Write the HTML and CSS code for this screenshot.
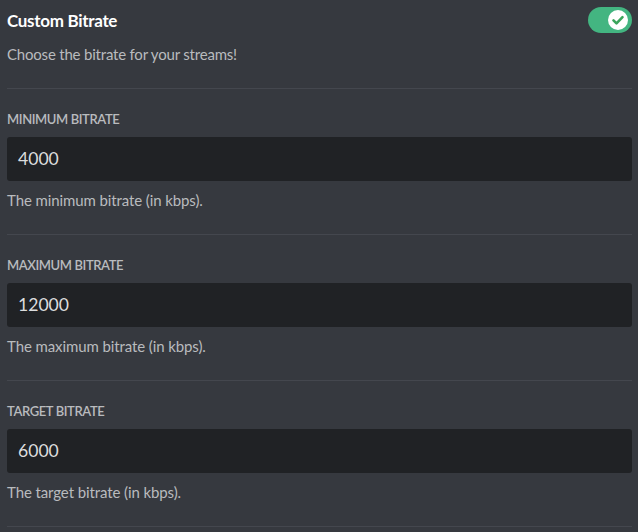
FILE: index.html
```html
<!DOCTYPE html>
<html>

<head>
<link rel="stylesheet" href="styles.css">
</head>

<body>
    <div class="settings">
        <div class="title-row">
            <h2 class="title">Custom Bitrate</h2>
            <div class="toggle">
                <div class="knob">
                    <svg viewBox="0 0 20 20" width="20" height="20">
                        <path d="M5.5 10.3l3 3 6-6.2" fill="none" stroke="#3ba55c" stroke-width="2.6" stroke-linecap="round" stroke-linejoin="round"/>
                    </svg>
                </div>
            </div>
        </div>
        <p class="desc">Choose the bitrate for your streams!</p>

        <div class="divider"></div>

        <div class="field">
            <div class="label">Minimum Bitrate</div>
            <div class="input">4000</div>
            <div class="help">The minimum bitrate (in kbps).</div>
        </div>

        <div class="divider"></div>

        <div class="field">
            <div class="label">Maximum Bitrate</div>
            <div class="input">12000</div>
            <div class="help">The maximum bitrate (in kbps).</div>
        </div>

        <div class="divider"></div>

        <div class="field">
            <div class="label">Target Bitrate</div>
            <div class="input">6000</div>
            <div class="help">The target bitrate (in kbps).</div>
        </div>

        <div class="divider"></div>
    </div>
</body>

</html>
```

FILE: styles.css
```css
body {
    margin: 0;
    background-color: #36393f;
    font-family: Lato, "Noto Sans", sans-serif;
}

.settings {
    padding: 7px 6px 0 7px;
}

.title-row {
    display: flex;
    justify-content: space-between;
    align-items: center;
    height: 26px;
}

.title {
    margin: 0;
    font-size: 17px;
    font-weight: 700;
    letter-spacing: -0.3px;
    color: #ffffff;
}

.toggle {
    width: 44px;
    height: 26px;
    border-radius: 13px;
    background-color: #43b581;
    display: flex;
    align-items: center;
    justify-content: flex-end;
    padding-right: 4px;
    box-sizing: border-box;
}

.knob {
    width: 20px;
    height: 20px;
    border-radius: 50%;
    background-color: #ffffff;
    display: flex;
}

.desc {
    margin: 11px 0 0 0;
    line-height: 20px;
    font-size: 15px;
    letter-spacing: -0.2px;
    color: #b9bbbe;
}

.divider {
    height: 1px;
    margin-top: 23.5px;
    background-color: #44474e;
}

.field {
    padding-top: 22.5px;
}

.label {
    line-height: 16px;
    font-size: 13px;
    font-weight: 600;
    letter-spacing: -0.4px;
    text-transform: uppercase;
    color: #b9bbbe;
}

.input {
    margin-top: 10px;
    height: 44px;
    line-height: 44px;
    padding: 0 11px;
    border-radius: 3px;
    background-color: #202225;
    font-size: 17.6px;
    color: #dcddde;
}

.help {
    margin-top: 9px;
    line-height: 20px;
    font-size: 15px;
    letter-spacing: -0.1px;
    color: #b9bbbe;
}
```
